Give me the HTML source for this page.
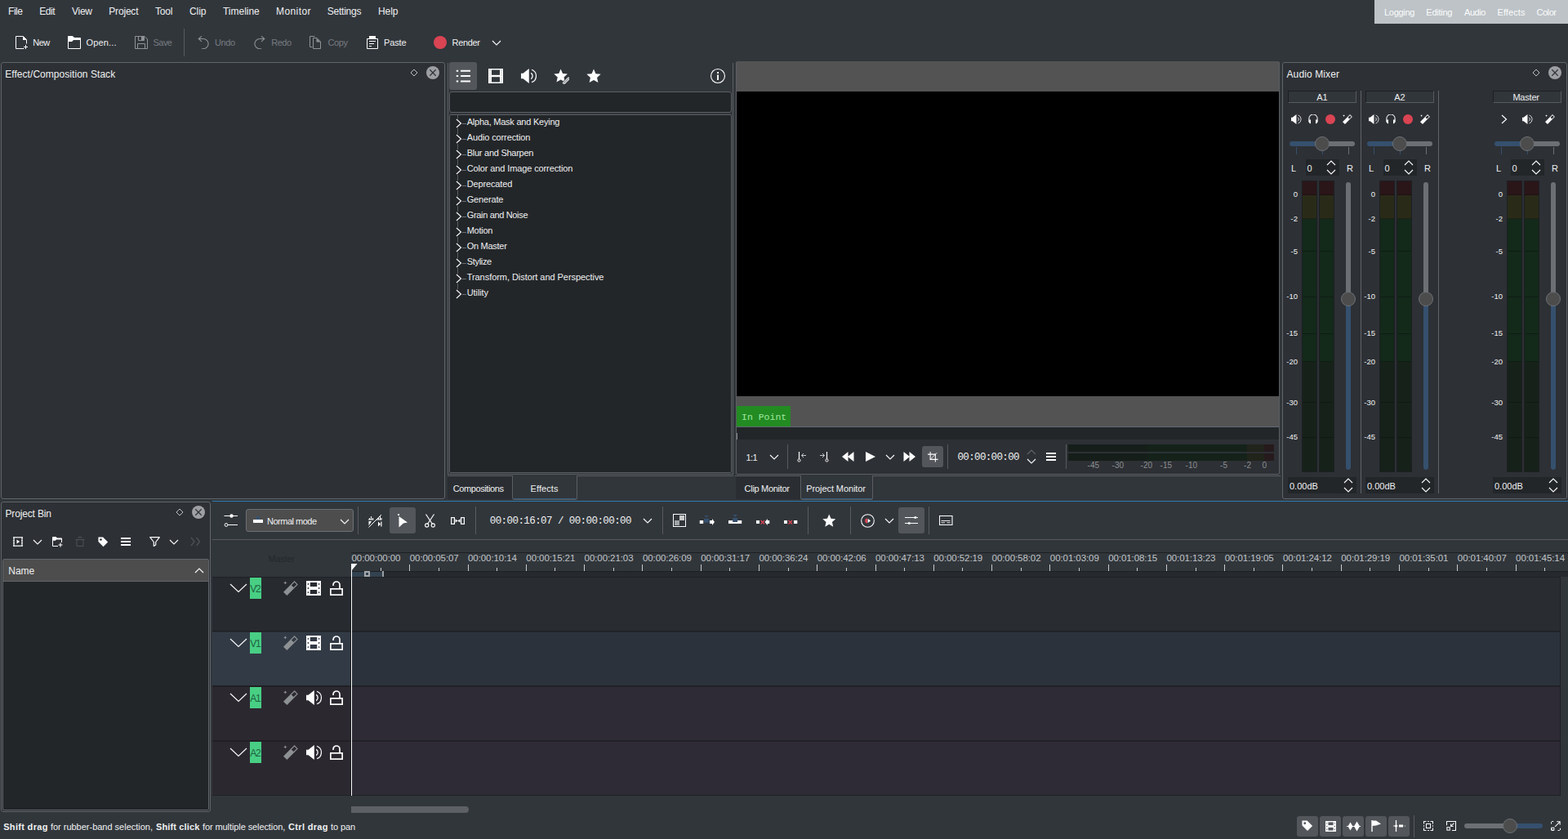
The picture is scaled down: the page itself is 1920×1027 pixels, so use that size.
<!DOCTYPE html>
<html lang="en"><head><meta charset="utf-8"><title>Kdenlive</title>
<style>
html,body{margin:0;padding:0;}
body{width:1920px;height:1027px;overflow:hidden;background:#31363b;font-family:"Liberation Sans",sans-serif;font-size:12px;color:#eff0f1;position:relative;}
body div, body svg{position:absolute;box-sizing:border-box;}
body div div{position:absolute;}
.mono{font-family:"Liberation Mono",monospace;}
</style></head>
<body>
<div style="left:10.0px;top:6px;height:16px;line-height:16px;font-size:12px;color:#eff0f1;white-space:nowrap;letter-spacing:-0.440px;">File</div>
<div style="left:48.25px;top:6px;height:16px;line-height:16px;font-size:12px;color:#eff0f1;white-space:nowrap;letter-spacing:-0.483px;">Edit</div>
<div style="left:88.0px;top:6px;height:16px;line-height:16px;font-size:12px;color:#eff0f1;white-space:nowrap;letter-spacing:-0.267px;">View</div>
<div style="left:133.25px;top:6px;height:16px;line-height:16px;font-size:12px;color:#eff0f1;white-space:nowrap;letter-spacing:-0.178px;">Project</div>
<div style="left:190.0px;top:6px;height:16px;line-height:16px;font-size:12px;color:#eff0f1;white-space:nowrap;letter-spacing:-0.173px;">Tool</div>
<div style="left:232.0px;top:6px;height:16px;line-height:16px;font-size:12px;color:#eff0f1;white-space:nowrap;letter-spacing:-0.067px;">Clip</div>
<div style="left:273.0px;top:6px;height:16px;line-height:16px;font-size:12px;color:#eff0f1;white-space:nowrap;letter-spacing:-0.019px;">Timeline</div>
<div style="left:338.0px;top:6px;height:16px;line-height:16px;font-size:12px;color:#eff0f1;white-space:nowrap;letter-spacing:0.413px;">Monitor</div>
<div style="left:400.75px;top:6px;height:16px;line-height:16px;font-size:12px;color:#eff0f1;white-space:nowrap;letter-spacing:-0.233px;">Settings</div>
<div style="left:463.0px;top:6px;height:16px;line-height:16px;font-size:12px;color:#eff0f1;white-space:nowrap;letter-spacing:-0.053px;">Help</div>
<div style="left:1683px;top:0px;width:237px;height:29px;background:#bdc3c7;"></div>
<div style="left:1695.0px;top:8px;height:14px;line-height:14px;font-size:11px;color:#fcfcfc;white-space:nowrap;letter-spacing:-0.277px;">Logging</div>
<div style="left:1746.3px;top:8px;height:14px;line-height:14px;font-size:11px;color:#fcfcfc;white-space:nowrap;letter-spacing:-0.243px;">Editing</div>
<div style="left:1793.0px;top:8px;height:14px;line-height:14px;font-size:11px;color:#fcfcfc;white-space:nowrap;letter-spacing:-0.415px;">Audio</div>
<div style="left:1833.5px;top:8px;height:14px;line-height:14px;font-size:11px;color:#fcfcfc;white-space:nowrap;letter-spacing:0.077px;">Effects</div>
<div style="left:1881.4px;top:8px;height:14px;line-height:14px;font-size:11px;color:#fcfcfc;white-space:nowrap;letter-spacing:-0.423px;">Color</div>
<svg style="left:18px;top:44px;" width="16" height="16" viewBox="0 0 16 16"><path d="M1.5 0.5H10.5L14.5 4.5V9.5M11.5 15.5H1.5V0.5" fill="none" stroke="#fcfcfc" stroke-width="1"/><path d="M10 0.5V5H14.5Z" fill="#fcfcfc"/><path d="M13.5 11V16M11 13.5H16" stroke="#fcfcfc" stroke-width="1" fill="none"/></svg>
<div style="left:40.25px;top:44px;height:16px;line-height:16px;font-size:11px;color:#eff0f1;white-space:nowrap;letter-spacing:-0.527px;">New</div>
<svg style="left:83px;top:44px;" width="16" height="16" viewBox="0 0 16 16"><path d="M0.5 0.5H6L8 2.5H15.5V15.5H0.5Z" fill="none" stroke="#fcfcfc"/><path d="M0.5 0.5H6L8 2.5H15.5V5H7L5 7H0.5Z" fill="#fcfcfc"/></svg>
<div style="left:105.6px;top:44px;height:16px;line-height:16px;font-size:11px;color:#eff0f1;white-space:nowrap;letter-spacing:0.137px;">Open...</div>
<svg style="left:165px;top:44px;" width="16" height="16" viewBox="0 0 16 16"><path d="M0.5 0.5H12L15.5 4V15.5H0.5Z" fill="none" stroke="#8f9396"/><path d="M4.5 0.5V5.5H11.5V0.5" fill="none" stroke="#8f9396"/><rect x="8" y="1" width="3" height="4" fill="#8f9396"/><path d="M3.5 15.5V9.5H12.5V15.5" fill="none" stroke="#8f9396"/></svg>
<div style="left:187.5px;top:44px;height:16px;line-height:16px;font-size:11px;color:#777b80;white-space:nowrap;letter-spacing:-0.527px;">Save</div>
<div style="left:225px;top:35px;width:1px;height:34px;background:#585c61;"></div>
<svg style="left:242px;top:44px;" width="16" height="16" viewBox="0 0 16 16"><path d="M5 0.3L1.2 3.5L5 6.800M1.2 3.5H7A6.1 6.1 0 0 1 7 15.700H4.800" fill="none" stroke="#8f9396" stroke-width="1.100"/></svg>
<div style="left:263.0px;top:44px;height:16px;line-height:16px;font-size:11px;color:#777b80;white-space:nowrap;letter-spacing:-0.430px;">Undo</div>
<svg style="left:311px;top:44px;" width="16" height="16" viewBox="0 0 16 16"><path d="M9 0.3L12.800 3.5L9 6.800M12.800 3.5H7A6.1 6.1 0 0 0 7 15.700H9.200" fill="none" stroke="#8f9396" stroke-width="1.100"/></svg>
<div style="left:332.25px;top:44px;height:16px;line-height:16px;font-size:11px;color:#777b80;white-space:nowrap;letter-spacing:-0.513px;">Redo</div>
<svg style="left:378px;top:44px;" width="16" height="16" viewBox="0 0 16 16"><path d="M4.500 13.500H1.500V0.500H7.500" fill="none" stroke="#8f9396"/><path d="M5.500 2.500H10L14.500 7V15.500H5.500Z" fill="none" stroke="#8f9396"/><path d="M9.500 2.500V7.500H14.500Z" fill="#8f9396"/></svg>
<div style="left:401.5px;top:44px;height:16px;line-height:16px;font-size:11px;color:#777b80;white-space:nowrap;letter-spacing:-0.395px;">Copy</div>
<svg style="left:448px;top:44px;" width="16" height="16" viewBox="0 0 16 16"><path d="M1.5 3.5H14.5V15.5H1.5Z" fill="none" stroke="#fcfcfc"/><rect x="4" y="0" width="8" height="4" fill="#fcfcfc"/><path d="M4 6.500H12M4 9.500H10M4 12.500H7" stroke="#fcfcfc" fill="none"/></svg>
<div style="left:470.0px;top:44px;height:16px;line-height:16px;font-size:11px;color:#eff0f1;white-space:nowrap;letter-spacing:-0.151px;">Paste</div>
<svg style="left:531px;top:44px;" width="16" height="16" viewBox="0 0 16 16"><circle cx="8" cy="8" r="8" fill="#da4453"/></svg>
<div style="left:553.6px;top:44px;height:16px;line-height:16px;font-size:11px;color:#eff0f1;white-space:nowrap;letter-spacing:-0.356px;">Render</div>
<svg style="left:602.0px;top:49.1px;" width="12" height="7" viewBox="0 0 12 7"><path d="M1 1L6 6L11 1" fill="none" stroke="#fcfcfc" stroke-width="1.1"/></svg>
<div style="left:1px;top:76px;width:544px;height:535px;background:#2d3035;border:1px solid #60656a;border-radius:3px;"></div>
<div style="left:6.25px;top:82.5px;height:16px;line-height:16px;font-size:12px;color:#eff0f1;white-space:nowrap;letter-spacing:0.047px;">Effect/Composition Stack</div>
<svg style="left:502px;top:84px;" width="10" height="10" viewBox="0 0 10 10"><path d="M5 1L9 5L5 9L1 5Z" fill="none" stroke="#bfc2c4" stroke-width="1"/></svg>
<svg style="left:521px;top:80px;" width="18" height="18" viewBox="0 0 18 18"><circle cx="9" cy="9" r="8" fill="#9d9fa2"/><path d="M5.3 5.3L12.7 12.7M12.7 5.3L5.3 12.7" stroke="#31363b" stroke-width="1.3" fill="none"/></svg>
<div style="left:548px;top:77px;width:1px;height:504px;background:#5b5f63;"></div>
<div style="left:897px;top:77px;width:1px;height:504px;background:#5b5f63;"></div>
<div style="left:550px;top:76px;width:34px;height:34px;background:#53575c;border-radius:3px;"></div>
<svg style="left:558px;top:84px;" width="19" height="18" viewBox="0 0 19 18"><path d="M6 2.7H18M6 9H18M6 15.5H18" stroke="#fcfcfc" stroke-width="2" fill="none"/><path d="M0.8 2.7H3.2M0.8 9H3.2M0.8 15.5H3.2" stroke="#fcfcfc" stroke-width="2" fill="none"/></svg>
<svg style="left:598px;top:84px;" width="18" height="18" viewBox="0 0 18 18"><rect x="0" y="0" width="18" height="18" fill="#fcfcfc"/><rect x="4" y="1.500" width="10" height="6.300" fill="#31363b"/><rect x="4" y="10.200" width="10" height="6.300" fill="#31363b"/><rect x="1.300" y="2" width="1.400" height="1.300" fill="#b9bbbd"/><rect x="15.300" y="2" width="1.400" height="1.300" fill="#b9bbbd"/><rect x="1.300" y="4.6" width="1.400" height="1.300" fill="#b9bbbd"/><rect x="15.300" y="4.6" width="1.400" height="1.300" fill="#b9bbbd"/><rect x="1.300" y="7.2" width="1.400" height="1.300" fill="#b9bbbd"/><rect x="15.300" y="7.2" width="1.400" height="1.300" fill="#b9bbbd"/><rect x="1.300" y="10.6" width="1.400" height="1.300" fill="#b9bbbd"/><rect x="15.300" y="10.6" width="1.400" height="1.300" fill="#b9bbbd"/><rect x="1.300" y="13.2" width="1.400" height="1.300" fill="#b9bbbd"/><rect x="15.300" y="13.2" width="1.400" height="1.300" fill="#b9bbbd"/><rect x="1.300" y="15.8" width="1.400" height="1.300" fill="#b9bbbd"/><rect x="15.300" y="15.8" width="1.400" height="1.300" fill="#b9bbbd"/></svg>
<svg style="left:638px;top:84px;" width="19" height="18" viewBox="0 0 19 18"><path d="M0 5.700H2.500L9.800 0V18L2.500 12.300H0Z" fill="#fcfcfc"/><path d="M12.200 5.400A4.300 4.300 0 0 1 12.200 12.600" fill="none" stroke="#fcfcfc" stroke-width="1.300"/><path d="M13 1.200A8.300 8.300 0 0 1 13 16.800" fill="none" stroke="#fcfcfc" stroke-width="1.200"/></svg>
<svg style="left:678px;top:84px;" width="19" height="19" viewBox="0 0 17.6 17.6"><path d="M8 0.5L10.2 5.6L15.7 6.1L11.6 9.8L12.8 15.2L8 12.4L3.2 15.2L4.4 9.8L0.3 6.1L5.8 5.6Z" fill="#fcfcfc"/><path d="M7.500 17.500L17.500 7.500L19 9L9 19Z" fill="#31363b"/><path d="M10.200 16.200L16.600 9.800L18.300 11.500L11.900 17.900Z" fill="#a9abad" stroke="#fcfcfc" stroke-width="0.800"/></svg>
<svg style="left:718px;top:84px;" width="18" height="18" viewBox="0 0 16 16"><path d="M8 0.5L10.2 5.6L15.7 6.1L11.6 9.8L12.8 15.2L8 12.4L3.2 15.2L4.4 9.8L0.3 6.1L5.8 5.6Z" fill="#fcfcfc"/></svg>
<svg style="left:869px;top:83px;" width="20" height="20" viewBox="0 0 20 20"><circle cx="10" cy="10" r="8.5" fill="none" stroke="#fcfcfc" stroke-width="1.1"/><rect x="9.1" y="8.5" width="1.9" height="6.5" fill="#fcfcfc"/><rect x="9.1" y="5" width="1.9" height="2" fill="#fcfcfc"/></svg>
<div style="left:550px;top:112px;width:346px;height:26px;background:#232629;border:1px solid #5b5f63;border-radius:3px;"></div>
<div style="left:550px;top:140px;width:346px;height:439px;background:#232629;border:1px solid #5b5f63;border-radius:2px;"></div>
<svg style="left:558.25px;top:145.0px;" width="7.5" height="12" viewBox="0 0 7.5 12"><path d="M1 1L6.5 6L1 11" fill="none" stroke="#fcfcfc" stroke-width="1.1"/></svg>
<div style="left:566px;top:150.5px;width:5px;height:1px;background:#6a6e72;"></div>
<div style="left:571.7px;top:141px;height:16px;line-height:16px;font-size:11px;color:#eff0f1;white-space:nowrap;letter-spacing:-0.235px;">Alpha, Mask and Keying</div>
<svg style="left:558.25px;top:164.0px;" width="7.5" height="12" viewBox="0 0 7.5 12"><path d="M1 1L6.5 6L1 11" fill="none" stroke="#fcfcfc" stroke-width="1.1"/></svg>
<div style="left:566px;top:169.5px;width:5px;height:1px;background:#6a6e72;"></div>
<div style="left:571.7px;top:160px;height:16px;line-height:16px;font-size:11px;color:#eff0f1;white-space:nowrap;letter-spacing:-0.118px;">Audio correction</div>
<svg style="left:558.25px;top:183.0px;" width="7.5" height="12" viewBox="0 0 7.5 12"><path d="M1 1L6.5 6L1 11" fill="none" stroke="#fcfcfc" stroke-width="1.1"/></svg>
<div style="left:566px;top:188.5px;width:5px;height:1px;background:#6a6e72;"></div>
<div style="left:571.7px;top:179px;height:16px;line-height:16px;font-size:11px;color:#eff0f1;white-space:nowrap;letter-spacing:-0.256px;">Blur and Sharpen</div>
<svg style="left:558.25px;top:202.0px;" width="7.5" height="12" viewBox="0 0 7.5 12"><path d="M1 1L6.5 6L1 11" fill="none" stroke="#fcfcfc" stroke-width="1.1"/></svg>
<div style="left:566px;top:207.5px;width:5px;height:1px;background:#6a6e72;"></div>
<div style="left:571.7px;top:198px;height:16px;line-height:16px;font-size:11px;color:#eff0f1;white-space:nowrap;letter-spacing:-0.118px;">Color and Image correction</div>
<svg style="left:558.25px;top:221.0px;" width="7.5" height="12" viewBox="0 0 7.5 12"><path d="M1 1L6.5 6L1 11" fill="none" stroke="#fcfcfc" stroke-width="1.1"/></svg>
<div style="left:566px;top:226.5px;width:5px;height:1px;background:#6a6e72;"></div>
<div style="left:571.7px;top:217px;height:16px;line-height:16px;font-size:11px;color:#eff0f1;white-space:nowrap;letter-spacing:-0.141px;">Deprecated</div>
<svg style="left:558.25px;top:240.0px;" width="7.5" height="12" viewBox="0 0 7.5 12"><path d="M1 1L6.5 6L1 11" fill="none" stroke="#fcfcfc" stroke-width="1.1"/></svg>
<div style="left:566px;top:245.5px;width:5px;height:1px;background:#6a6e72;"></div>
<div style="left:571.7px;top:236px;height:16px;line-height:16px;font-size:11px;color:#eff0f1;white-space:nowrap;letter-spacing:-0.167px;">Generate</div>
<svg style="left:558.25px;top:259.0px;" width="7.5" height="12" viewBox="0 0 7.5 12"><path d="M1 1L6.5 6L1 11" fill="none" stroke="#fcfcfc" stroke-width="1.1"/></svg>
<div style="left:566px;top:264.5px;width:5px;height:1px;background:#6a6e72;"></div>
<div style="left:571.7px;top:255px;height:16px;line-height:16px;font-size:11px;color:#eff0f1;white-space:nowrap;letter-spacing:-0.334px;">Grain and Noise</div>
<svg style="left:558.25px;top:278.0px;" width="7.5" height="12" viewBox="0 0 7.5 12"><path d="M1 1L6.5 6L1 11" fill="none" stroke="#fcfcfc" stroke-width="1.1"/></svg>
<div style="left:566px;top:283.5px;width:5px;height:1px;background:#6a6e72;"></div>
<div style="left:571.7px;top:274px;height:16px;line-height:16px;font-size:11px;color:#eff0f1;white-space:nowrap;letter-spacing:-0.260px;">Motion</div>
<svg style="left:558.25px;top:297.0px;" width="7.5" height="12" viewBox="0 0 7.5 12"><path d="M1 1L6.5 6L1 11" fill="none" stroke="#fcfcfc" stroke-width="1.1"/></svg>
<div style="left:566px;top:302.5px;width:5px;height:1px;background:#6a6e72;"></div>
<div style="left:571.7px;top:293px;height:16px;line-height:16px;font-size:11px;color:#eff0f1;white-space:nowrap;letter-spacing:-0.271px;">On Master</div>
<svg style="left:558.25px;top:316.0px;" width="7.5" height="12" viewBox="0 0 7.5 12"><path d="M1 1L6.5 6L1 11" fill="none" stroke="#fcfcfc" stroke-width="1.1"/></svg>
<div style="left:566px;top:321.5px;width:5px;height:1px;background:#6a6e72;"></div>
<div style="left:571.7px;top:312px;height:16px;line-height:16px;font-size:11px;color:#eff0f1;white-space:nowrap;letter-spacing:-0.316px;">Stylize</div>
<svg style="left:558.25px;top:335.0px;" width="7.5" height="12" viewBox="0 0 7.5 12"><path d="M1 1L6.5 6L1 11" fill="none" stroke="#fcfcfc" stroke-width="1.1"/></svg>
<div style="left:566px;top:340.5px;width:5px;height:1px;background:#6a6e72;"></div>
<div style="left:571.7px;top:331px;height:16px;line-height:16px;font-size:11px;color:#eff0f1;white-space:nowrap;letter-spacing:-0.053px;">Transform, Distort and Perspective</div>
<svg style="left:558.25px;top:354.0px;" width="7.5" height="12" viewBox="0 0 7.5 12"><path d="M1 1L6.5 6L1 11" fill="none" stroke="#fcfcfc" stroke-width="1.1"/></svg>
<div style="left:566px;top:359.5px;width:5px;height:1px;background:#6a6e72;"></div>
<div style="left:571.7px;top:350px;height:16px;line-height:16px;font-size:11px;color:#eff0f1;white-space:nowrap;letter-spacing:-0.083px;">Utility</div>
<div style="left:560px;top:141px;width:1px;height:4px;background:#5a5e62;"></div>
<div style="left:560px;top:157px;width:1px;height:7px;background:#5a5e62;"></div>
<div style="left:560px;top:176px;width:1px;height:7px;background:#5a5e62;"></div>
<div style="left:560px;top:195px;width:1px;height:7px;background:#5a5e62;"></div>
<div style="left:560px;top:214px;width:1px;height:7px;background:#5a5e62;"></div>
<div style="left:560px;top:233px;width:1px;height:7px;background:#5a5e62;"></div>
<div style="left:560px;top:252px;width:1px;height:7px;background:#5a5e62;"></div>
<div style="left:560px;top:271px;width:1px;height:7px;background:#5a5e62;"></div>
<div style="left:560px;top:290px;width:1px;height:7px;background:#5a5e62;"></div>
<div style="left:560px;top:309px;width:1px;height:7px;background:#5a5e62;"></div>
<div style="left:560px;top:328px;width:1px;height:7px;background:#5a5e62;"></div>
<div style="left:560px;top:347px;width:1px;height:7px;background:#5a5e62;"></div>
<div style="left:548px;top:582px;width:80px;height:1px;background:#5b5f63;"></div>
<div style="left:706px;top:582px;width:192px;height:1px;background:#5b5f63;"></div>
<div style="left:548px;top:583px;width:80px;height:28px;background:#2a2d32;border-radius:0 0 0 3px;"></div>
<div style="left:548px;top:580px;width:350px;height:1px;background:#5b5f63;"></div>
<div style="left:554.7px;top:590px;height:16px;line-height:16px;font-size:11px;color:#eff0f1;white-space:nowrap;letter-spacing:-0.396px;">Compositions</div>
<div style="left:627px;top:582px;width:80px;height:30px;border-left:1px solid #5b5f63;border-right:1px solid #5b5f63;border-bottom:1px solid #5b5f63;border-radius:0 0 3px 3px;background:#31363b;"></div>
<div style="left:629px;top:610px;width:76px;height:1px;background:#3a5f80;"></div>
<div style="left:649.6px;top:590px;height:16px;line-height:16px;font-size:11px;color:#eff0f1;white-space:nowrap;letter-spacing:0.077px;">Effects</div>
<div style="left:901px;top:75px;width:666px;height:506px;border:1px solid #5b5f63;border-radius:2px;background:#2d3035;"></div>
<div style="left:902px;top:75px;width:664px;height:37px;background:#535353;"></div>
<div style="left:902px;top:112px;width:664px;height:373px;background:#000;"></div>
<div style="left:902px;top:485px;width:664px;height:38px;background:#535353;"></div>
<div style="left:902px;top:522px;width:664px;height:1px;background:#5f6a74;"></div>
<div style="left:902px;top:523px;width:664px;height:15px;background:#232629;"></div>
<div style="left:902px;top:530px;width:1px;height:8px;background:#8a8d90;"></div>
<div style="left:902px;top:497px;width:66px;height:25px;background:#228b22;"></div>
<div style="left:908px;top:502.5px;height:16px;line-height:16px;font-size:11.5px;color:#9fe89f;white-space:nowrap;font-family:'Liberation Mono',monospace;">In Point</div>
<div style="left:913.5px;top:552px;height:16px;line-height:16px;font-size:11px;color:#eff0f1;white-space:nowrap;letter-spacing:-0.645px;">1:1</div>
<svg style="left:942.0px;top:556.0px;" width="12" height="7" viewBox="0 0 12 7"><path d="M1 1L6 6L11 1" fill="none" stroke="#fcfcfc" stroke-width="1.1"/></svg>
<div style="left:964px;top:544px;width:1px;height:30px;background:#585c61;"></div>
<svg style="left:976px;top:553px;" width="12" height="13" viewBox="0 0 12 13"><path d="M2.5 0V9" stroke="#fcfcfc" stroke-width="1.2" fill="none"/><circle cx="2.5" cy="10.5" r="1.6" fill="none" stroke="#fcfcfc" stroke-width="1"/><path d="M5.5 4.5H11M8 2L5.5 4.5L8 7" stroke="#c8cacc" stroke-width="1" fill="none"/></svg>
<svg style="left:1003px;top:553px;" width="12" height="13" viewBox="0 0 12 13"><path d="M9.5 0V9" stroke="#fcfcfc" stroke-width="1.2" fill="none"/><circle cx="9.5" cy="10.5" r="1.6" fill="none" stroke="#fcfcfc" stroke-width="1"/><path d="M1 4.5H6.5M4 2L6.5 4.5L4 7" stroke="#c8cacc" stroke-width="1" fill="none"/></svg>
<svg style="left:1031px;top:553px;" width="15" height="12" viewBox="0 0 15 12"><path d="M7.5 0V12L0 6ZM14.5 0V12L7 6Z" fill="#fcfcfc"/></svg>
<svg style="left:1060px;top:553px;" width="12" height="12" viewBox="0 0 12 12"><path d="M0 0L12 6L0 12Z" fill="#fcfcfc"/></svg>
<svg style="left:1083.5px;top:556.0px;" width="12" height="7" viewBox="0 0 12 7"><path d="M1 1L6 6L11 1" fill="none" stroke="#fcfcfc" stroke-width="1.1"/></svg>
<svg style="left:1106px;top:553px;" width="15" height="12" viewBox="0 0 15 12"><path d="M0.5 0V12L8 6ZM7.5 0V12L15 6Z" fill="#fcfcfc"/></svg>
<div style="left:1129px;top:546px;width:26px;height:26px;background:#53575c;border-radius:3px;"></div>
<svg style="left:1136px;top:553px;" width="12.5" height="12.5" viewBox="0 0 14 14"><path d="M3.5 0V10.5H14M0 3.5H10.5V14" stroke="#fcfcfc" stroke-width="1.2" fill="none"/><path d="M3.5 10.5L12.5 1.5" stroke="#fcfcfc" stroke-width="1" fill="none"/></svg>
<div style="left:1160px;top:544px;width:1px;height:30px;background:#585c61;"></div>
<div style="left:1172.5px;top:552px;height:16px;line-height:16px;font-size:12.5px;color:#eff0f1;white-space:nowrap;letter-spacing:-0.650px;font-family:'Liberation Mono',monospace;">00:00:00:00</div>
<svg style="left:1257.0px;top:550.0px;" width="12" height="7" viewBox="0 0 12 7"><path d="M1 6L6 1L11 6" fill="none" stroke="#62666a" stroke-width="1.1"/></svg>
<svg style="left:1257.0px;top:560.8px;" width="12" height="7" viewBox="0 0 12 7"><path d="M1 1L6 6L11 1" fill="none" stroke="#fcfcfc" stroke-width="1.1"/></svg>
<svg style="left:1281px;top:554px;" width="12" height="10" viewBox="0 0 12 10"><path d="M0 1H12M0 5H12M0 9H12" stroke="#fcfcfc" stroke-width="2" fill="none"/></svg>
<div style="left:1305px;top:544px;width:1px;height:30px;background:#585c61;"></div>
<div style="left:1308px;top:544px;width:252px;height:9px;background:linear-gradient(to right,#151e19 0,#151e19 97px,#14221a 97px,#14221a 219px,#21241a 219px,#21241a 240px,#261a1c 240px);"></div>
<div style="left:1308px;top:555px;width:252px;height:9px;background:linear-gradient(to right,#151e19 0,#151e19 97px,#14221a 97px,#14221a 219px,#21241a 219px,#21241a 240px,#261a1c 240px);"></div>
<div style="left:1316px;top:564px;height:12px;line-height:12px;font-size:10px;color:#8b8e91;white-space:nowrap;width:30px;text-align:right;">-45</div>
<div style="left:1346px;top:564px;height:12px;line-height:12px;font-size:10px;color:#8b8e91;white-space:nowrap;width:30px;text-align:right;">-30</div>
<div style="left:1381px;top:564px;height:12px;line-height:12px;font-size:10px;color:#8b8e91;white-space:nowrap;width:30px;text-align:right;">-20</div>
<div style="left:1405px;top:564px;height:12px;line-height:12px;font-size:10px;color:#8b8e91;white-space:nowrap;width:30px;text-align:right;">-15</div>
<div style="left:1436px;top:564px;height:12px;line-height:12px;font-size:10px;color:#8b8e91;white-space:nowrap;width:30px;text-align:right;">-10</div>
<div style="left:1473px;top:564px;height:12px;line-height:12px;font-size:10px;color:#8b8e91;white-space:nowrap;width:30px;text-align:right;">-5</div>
<div style="left:1502px;top:564px;height:12px;line-height:12px;font-size:10px;color:#8b8e91;white-space:nowrap;width:30px;text-align:right;">-2</div>
<div style="left:1521px;top:564px;height:12px;line-height:12px;font-size:10px;color:#8b8e91;white-space:nowrap;width:30px;text-align:right;">0</div>
<div style="left:900px;top:582px;width:81px;height:1px;background:#5b5f63;"></div>
<div style="left:1068px;top:582px;width:500px;height:1px;background:#5b5f63;"></div>
<div style="left:901px;top:583px;width:80px;height:28px;background:#2a2e32;border-radius:0 0 0 3px;"></div>
<div style="left:911.6px;top:590px;height:16px;line-height:16px;font-size:11px;color:#eff0f1;white-space:nowrap;letter-spacing:-0.299px;">Clip Monitor</div>
<div style="left:980px;top:582px;width:89px;height:30px;border-left:1px solid #5b5f63;border-right:1px solid #5b5f63;border-bottom:1px solid #5b5f63;border-radius:0 0 3px 3px;background:#31363b;"></div>
<div style="left:982px;top:610px;width:85px;height:1px;background:#3a5f80;"></div>
<div style="left:987.25px;top:590px;height:16px;line-height:16px;font-size:11px;color:#eff0f1;white-space:nowrap;letter-spacing:-0.087px;">Project Monitor</div>
<div style="left:260px;top:613px;width:1660px;height:1px;background:#2f7bb0;"></div>
<div style="left:1570px;top:76px;width:349px;height:535px;background:#2d3035;border:1px solid #60656a;border-radius:3px;"></div>
<div style="left:1575.5px;top:82.5px;height:16px;line-height:16px;font-size:12px;color:#eff0f1;white-space:nowrap;letter-spacing:0.114px;">Audio Mixer</div>
<svg style="left:1876px;top:84px;" width="10" height="10" viewBox="0 0 10 10"><path d="M5 1L9 5L5 9L1 5Z" fill="none" stroke="#bfc2c4" stroke-width="1"/></svg>
<svg style="left:1895px;top:80px;" width="18" height="18" viewBox="0 0 18 18"><circle cx="9" cy="9" r="8" fill="#9d9fa2"/><path d="M5.3 5.3L12.7 12.7M12.7 5.3L5.3 12.7" stroke="#31363b" stroke-width="1.3" fill="none"/></svg>
<div style="left:1577px;top:111px;width:84px;height:15px;background:#31363b;border-top:1px solid #1d2023;border-left:1px solid #1d2023;border-bottom:1px solid #565b60;border-right:1px solid #565b60;"></div>
<div style="left:1577px;top:111.5px;height:14px;line-height:14px;font-size:11px;color:#eff0f1;white-space:nowrap;width:84px;text-align:center;">A1</div>
<svg style="left:1581px;top:140px;" width="12.5" height="12" viewBox="0 0 19 18"><path d="M0 5.700H2.500L9.800 0V18L2.500 12.300H0Z" fill="#fcfcfc"/><path d="M12.200 5.400A4.300 4.300 0 0 1 12.200 12.600" fill="none" stroke="#fcfcfc" stroke-width="1.300"/><path d="M13 1.200A8.300 8.300 0 0 1 13 16.800" fill="none" stroke="#fcfcfc" stroke-width="1.200"/></svg>
<svg style="left:1602px;top:140px;" width="12" height="12" viewBox="1 2 14 14"><path d="M2 13V8A6 6 0 0 1 14 8V13" fill="none" stroke="#fcfcfc" stroke-width="1.2"/><path d="M2 9.5H4.5V15H3.2L2 13Z M14 9.5H11.5V15H12.8L14 13Z" fill="#fcfcfc"/></svg>
<svg style="left:1623px;top:140px;" width="12" height="12" viewBox="0 0 12 12"><circle cx="6" cy="6" r="6" fill="#da4453"/></svg>
<svg style="left:1644px;top:140px;" width="12" height="12" viewBox="0 0 18 18"><path d="M0 13.7L4.4 18L17.8 4.4L13.6 0Z" fill="#fcfcfc"/><path d="M13.6 1.8L16.2 4.4L12.4 8.1L9.9 5.6Z" fill="#2d3035"/><path d="M2.3 0.3L3 1.8L4.5 2.4L3 3L2.3 4.6L1.6 3L0.1 2.4L1.6 1.8Z" fill="#fcfcfc"/></svg>
<div style="left:1579px;top:173px;width:40px;height:6px;background:#35506e;border-radius:3px 0 0 3px;"></div>
<div style="left:1619px;top:173px;width:40px;height:6px;background:#6c7074;border-radius:0 3px 3px 0;"></div>
<div style="left:1610px;top:167px;width:18px;height:18px;background:#4c4c4c;border:1px solid #6c7074;border-radius:9px;"></div>
<div style="left:1587px;top:180px;width:1px;height:9px;background:#35506e;"></div>
<div style="left:1619px;top:185px;width:1px;height:4px;background:#35506e;"></div>
<div style="left:1651px;top:180px;width:1px;height:9px;background:#6c7074;"></div>
<div style="left:1581px;top:198px;height:16px;line-height:16px;font-size:11px;color:#eff0f1;white-space:nowrap;">L</div>
<div style="left:1599px;top:195px;width:41px;height:20px;background:#232629;"></div>
<div style="left:1600.5px;top:198px;height:16px;line-height:16px;font-size:11px;color:#eff0f1;white-space:nowrap;">0</div>
<svg style="left:1624.0px;top:196.0px;" width="12" height="7" viewBox="0 0 12 7"><path d="M1 6L6 1L11 6" fill="none" stroke="#fcfcfc" stroke-width="1.1"/></svg>
<svg style="left:1624.0px;top:207.0px;" width="12" height="7" viewBox="0 0 12 7"><path d="M1 1L6 6L11 1" fill="none" stroke="#fcfcfc" stroke-width="1.1"/></svg>
<div style="left:1649px;top:198px;height:16px;line-height:16px;font-size:11px;color:#eff0f1;white-space:nowrap;">R</div>
<div style="left:1594px;top:221px;width:19px;height:357px;background:linear-gradient(to bottom,#2a1619 0,#2a1619 17px,#292b18 17px,#292b18 46px,#13291a 46px,#13291a 221px,#16211a 221px);border:1px solid #1c1f22;"></div>
<div style="left:1595px;top:238px;width:17px;height:1px;background:rgba(0,0,0,0.25);"></div>
<div style="left:1595px;top:267px;width:17px;height:1px;background:rgba(0,0,0,0.25);"></div>
<div style="left:1595px;top:307px;width:17px;height:1px;background:rgba(0,0,0,0.25);"></div>
<div style="left:1595px;top:363px;width:17px;height:1px;background:rgba(0,0,0,0.25);"></div>
<div style="left:1595px;top:408px;width:17px;height:1px;background:rgba(0,0,0,0.25);"></div>
<div style="left:1595px;top:442px;width:17px;height:1px;background:rgba(0,0,0,0.25);"></div>
<div style="left:1595px;top:492px;width:17px;height:1px;background:rgba(0,0,0,0.25);"></div>
<div style="left:1595px;top:535px;width:17px;height:1px;background:rgba(0,0,0,0.25);"></div>
<div style="left:1615px;top:221px;width:19px;height:357px;background:linear-gradient(to bottom,#2a1619 0,#2a1619 17px,#292b18 17px,#292b18 46px,#13291a 46px,#13291a 221px,#16211a 221px);border:1px solid #1c1f22;"></div>
<div style="left:1616px;top:238px;width:17px;height:1px;background:rgba(0,0,0,0.25);"></div>
<div style="left:1616px;top:267px;width:17px;height:1px;background:rgba(0,0,0,0.25);"></div>
<div style="left:1616px;top:307px;width:17px;height:1px;background:rgba(0,0,0,0.25);"></div>
<div style="left:1616px;top:363px;width:17px;height:1px;background:rgba(0,0,0,0.25);"></div>
<div style="left:1616px;top:408px;width:17px;height:1px;background:rgba(0,0,0,0.25);"></div>
<div style="left:1616px;top:442px;width:17px;height:1px;background:rgba(0,0,0,0.25);"></div>
<div style="left:1616px;top:492px;width:17px;height:1px;background:rgba(0,0,0,0.25);"></div>
<div style="left:1616px;top:535px;width:17px;height:1px;background:rgba(0,0,0,0.25);"></div>
<div style="left:1561px;top:231.5px;height:12px;line-height:12px;font-size:9.5px;color:#eff0f1;white-space:nowrap;width:28px;text-align:right;">0</div>
<div style="left:1561px;top:261.5px;height:12px;line-height:12px;font-size:9.5px;color:#eff0f1;white-space:nowrap;width:28px;text-align:right;">-2</div>
<div style="left:1561px;top:301.5px;height:12px;line-height:12px;font-size:9.5px;color:#eff0f1;white-space:nowrap;width:28px;text-align:right;">-5</div>
<div style="left:1561px;top:356.5px;height:12px;line-height:12px;font-size:9.5px;color:#eff0f1;white-space:nowrap;width:28px;text-align:right;">-10</div>
<div style="left:1561px;top:401.5px;height:12px;line-height:12px;font-size:9.5px;color:#eff0f1;white-space:nowrap;width:28px;text-align:right;">-15</div>
<div style="left:1561px;top:436.5px;height:12px;line-height:12px;font-size:9.5px;color:#eff0f1;white-space:nowrap;width:28px;text-align:right;">-20</div>
<div style="left:1561px;top:486.5px;height:12px;line-height:12px;font-size:9.5px;color:#eff0f1;white-space:nowrap;width:28px;text-align:right;">-30</div>
<div style="left:1561px;top:528.5px;height:12px;line-height:12px;font-size:9.5px;color:#eff0f1;white-space:nowrap;width:28px;text-align:right;">-45</div>
<div style="left:1648px;top:223px;width:6px;height:143px;background:#6c7074;border-radius:3px 3px 0 0;"></div>
<div style="left:1648px;top:366px;width:6px;height:209px;background:#35506e;border-radius:0 0 3px 3px;"></div>
<div style="left:1642px;top:357px;width:18px;height:18px;background:#4c4c4c;border:1px solid #6c7074;border-radius:9px;"></div>
<div style="left:1577px;top:584px;width:84px;height:20px;background:#232629;"></div>
<div style="left:1579px;top:587px;height:16px;line-height:16px;font-size:11px;color:#eff0f1;white-space:nowrap;">0.00dB</div>
<svg style="left:1645.0px;top:585.0px;" width="12" height="7" viewBox="0 0 12 7"><path d="M1 6L6 1L11 6" fill="none" stroke="#fcfcfc" stroke-width="1.1"/></svg>
<svg style="left:1645.0px;top:596.0px;" width="12" height="7" viewBox="0 0 12 7"><path d="M1 1L6 6L11 1" fill="none" stroke="#fcfcfc" stroke-width="1.1"/></svg>
<div style="left:1672px;top:111px;width:84px;height:15px;background:#31363b;border-top:1px solid #1d2023;border-left:1px solid #1d2023;border-bottom:1px solid #565b60;border-right:1px solid #565b60;"></div>
<div style="left:1672px;top:111.5px;height:14px;line-height:14px;font-size:11px;color:#eff0f1;white-space:nowrap;width:84px;text-align:center;">A2</div>
<svg style="left:1676px;top:140px;" width="12.5" height="12" viewBox="0 0 19 18"><path d="M0 5.700H2.500L9.800 0V18L2.500 12.300H0Z" fill="#fcfcfc"/><path d="M12.200 5.400A4.300 4.300 0 0 1 12.200 12.600" fill="none" stroke="#fcfcfc" stroke-width="1.300"/><path d="M13 1.200A8.300 8.300 0 0 1 13 16.800" fill="none" stroke="#fcfcfc" stroke-width="1.200"/></svg>
<svg style="left:1697px;top:140px;" width="12" height="12" viewBox="1 2 14 14"><path d="M2 13V8A6 6 0 0 1 14 8V13" fill="none" stroke="#fcfcfc" stroke-width="1.2"/><path d="M2 9.5H4.5V15H3.2L2 13Z M14 9.5H11.5V15H12.8L14 13Z" fill="#fcfcfc"/></svg>
<svg style="left:1718px;top:140px;" width="12" height="12" viewBox="0 0 12 12"><circle cx="6" cy="6" r="6" fill="#da4453"/></svg>
<svg style="left:1739px;top:140px;" width="12" height="12" viewBox="0 0 18 18"><path d="M0 13.7L4.4 18L17.8 4.4L13.6 0Z" fill="#fcfcfc"/><path d="M13.6 1.8L16.2 4.4L12.4 8.1L9.9 5.6Z" fill="#2d3035"/><path d="M2.3 0.3L3 1.8L4.5 2.4L3 3L2.3 4.6L1.6 3L0.1 2.4L1.6 1.8Z" fill="#fcfcfc"/></svg>
<div style="left:1674px;top:173px;width:40px;height:6px;background:#35506e;border-radius:3px 0 0 3px;"></div>
<div style="left:1714px;top:173px;width:40px;height:6px;background:#6c7074;border-radius:0 3px 3px 0;"></div>
<div style="left:1705px;top:167px;width:18px;height:18px;background:#4c4c4c;border:1px solid #6c7074;border-radius:9px;"></div>
<div style="left:1682px;top:180px;width:1px;height:9px;background:#35506e;"></div>
<div style="left:1714px;top:185px;width:1px;height:4px;background:#35506e;"></div>
<div style="left:1746px;top:180px;width:1px;height:9px;background:#6c7074;"></div>
<div style="left:1676px;top:198px;height:16px;line-height:16px;font-size:11px;color:#eff0f1;white-space:nowrap;">L</div>
<div style="left:1694px;top:195px;width:41px;height:20px;background:#232629;"></div>
<div style="left:1695.5px;top:198px;height:16px;line-height:16px;font-size:11px;color:#eff0f1;white-space:nowrap;">0</div>
<svg style="left:1719.0px;top:196.0px;" width="12" height="7" viewBox="0 0 12 7"><path d="M1 6L6 1L11 6" fill="none" stroke="#fcfcfc" stroke-width="1.1"/></svg>
<svg style="left:1719.0px;top:207.0px;" width="12" height="7" viewBox="0 0 12 7"><path d="M1 1L6 6L11 1" fill="none" stroke="#fcfcfc" stroke-width="1.1"/></svg>
<div style="left:1744px;top:198px;height:16px;line-height:16px;font-size:11px;color:#eff0f1;white-space:nowrap;">R</div>
<div style="left:1689px;top:221px;width:19px;height:357px;background:linear-gradient(to bottom,#2a1619 0,#2a1619 17px,#292b18 17px,#292b18 46px,#13291a 46px,#13291a 221px,#16211a 221px);border:1px solid #1c1f22;"></div>
<div style="left:1690px;top:238px;width:17px;height:1px;background:rgba(0,0,0,0.25);"></div>
<div style="left:1690px;top:267px;width:17px;height:1px;background:rgba(0,0,0,0.25);"></div>
<div style="left:1690px;top:307px;width:17px;height:1px;background:rgba(0,0,0,0.25);"></div>
<div style="left:1690px;top:363px;width:17px;height:1px;background:rgba(0,0,0,0.25);"></div>
<div style="left:1690px;top:408px;width:17px;height:1px;background:rgba(0,0,0,0.25);"></div>
<div style="left:1690px;top:442px;width:17px;height:1px;background:rgba(0,0,0,0.25);"></div>
<div style="left:1690px;top:492px;width:17px;height:1px;background:rgba(0,0,0,0.25);"></div>
<div style="left:1690px;top:535px;width:17px;height:1px;background:rgba(0,0,0,0.25);"></div>
<div style="left:1710px;top:221px;width:19px;height:357px;background:linear-gradient(to bottom,#2a1619 0,#2a1619 17px,#292b18 17px,#292b18 46px,#13291a 46px,#13291a 221px,#16211a 221px);border:1px solid #1c1f22;"></div>
<div style="left:1711px;top:238px;width:17px;height:1px;background:rgba(0,0,0,0.25);"></div>
<div style="left:1711px;top:267px;width:17px;height:1px;background:rgba(0,0,0,0.25);"></div>
<div style="left:1711px;top:307px;width:17px;height:1px;background:rgba(0,0,0,0.25);"></div>
<div style="left:1711px;top:363px;width:17px;height:1px;background:rgba(0,0,0,0.25);"></div>
<div style="left:1711px;top:408px;width:17px;height:1px;background:rgba(0,0,0,0.25);"></div>
<div style="left:1711px;top:442px;width:17px;height:1px;background:rgba(0,0,0,0.25);"></div>
<div style="left:1711px;top:492px;width:17px;height:1px;background:rgba(0,0,0,0.25);"></div>
<div style="left:1711px;top:535px;width:17px;height:1px;background:rgba(0,0,0,0.25);"></div>
<div style="left:1656px;top:231.5px;height:12px;line-height:12px;font-size:9.5px;color:#eff0f1;white-space:nowrap;width:28px;text-align:right;">0</div>
<div style="left:1656px;top:261.5px;height:12px;line-height:12px;font-size:9.5px;color:#eff0f1;white-space:nowrap;width:28px;text-align:right;">-2</div>
<div style="left:1656px;top:301.5px;height:12px;line-height:12px;font-size:9.5px;color:#eff0f1;white-space:nowrap;width:28px;text-align:right;">-5</div>
<div style="left:1656px;top:356.5px;height:12px;line-height:12px;font-size:9.5px;color:#eff0f1;white-space:nowrap;width:28px;text-align:right;">-10</div>
<div style="left:1656px;top:401.5px;height:12px;line-height:12px;font-size:9.5px;color:#eff0f1;white-space:nowrap;width:28px;text-align:right;">-15</div>
<div style="left:1656px;top:436.5px;height:12px;line-height:12px;font-size:9.5px;color:#eff0f1;white-space:nowrap;width:28px;text-align:right;">-20</div>
<div style="left:1656px;top:486.5px;height:12px;line-height:12px;font-size:9.5px;color:#eff0f1;white-space:nowrap;width:28px;text-align:right;">-30</div>
<div style="left:1656px;top:528.5px;height:12px;line-height:12px;font-size:9.5px;color:#eff0f1;white-space:nowrap;width:28px;text-align:right;">-45</div>
<div style="left:1743px;top:223px;width:6px;height:143px;background:#6c7074;border-radius:3px 3px 0 0;"></div>
<div style="left:1743px;top:366px;width:6px;height:209px;background:#35506e;border-radius:0 0 3px 3px;"></div>
<div style="left:1737px;top:357px;width:18px;height:18px;background:#4c4c4c;border:1px solid #6c7074;border-radius:9px;"></div>
<div style="left:1672px;top:584px;width:84px;height:20px;background:#232629;"></div>
<div style="left:1674px;top:587px;height:16px;line-height:16px;font-size:11px;color:#eff0f1;white-space:nowrap;">0.00dB</div>
<svg style="left:1740.0px;top:585.0px;" width="12" height="7" viewBox="0 0 12 7"><path d="M1 6L6 1L11 6" fill="none" stroke="#fcfcfc" stroke-width="1.1"/></svg>
<svg style="left:1740.0px;top:596.0px;" width="12" height="7" viewBox="0 0 12 7"><path d="M1 1L6 6L11 1" fill="none" stroke="#fcfcfc" stroke-width="1.1"/></svg>
<div style="left:1828px;top:111px;width:84px;height:15px;background:#31363b;border-top:1px solid #1d2023;border-left:1px solid #1d2023;border-bottom:1px solid #565b60;border-right:1px solid #565b60;"></div>
<div style="left:1852.4px;top:111.5px;height:14px;line-height:14px;font-size:11px;color:#eff0f1;white-space:nowrap;letter-spacing:-0.201px;">Master</div>
<svg style="left:1838.25px;top:140.0px;" width="7.5" height="12" viewBox="0 0 7.5 12"><path d="M1 1L6.5 6L1 11" fill="none" stroke="#fcfcfc" stroke-width="1.2"/></svg>
<svg style="left:1864px;top:140px;" width="12.5" height="12" viewBox="0 0 19 18"><path d="M0 5.700H2.500L9.800 0V18L2.500 12.300H0Z" fill="#fcfcfc"/><path d="M12.200 5.400A4.300 4.300 0 0 1 12.200 12.600" fill="none" stroke="#fcfcfc" stroke-width="1.300"/><path d="M13 1.200A8.300 8.300 0 0 1 13 16.800" fill="none" stroke="#fcfcfc" stroke-width="1.200"/></svg>
<svg style="left:1892px;top:140px;" width="12" height="12" viewBox="0 0 18 18"><path d="M0 13.7L4.4 18L17.8 4.4L13.6 0Z" fill="#fcfcfc"/><path d="M13.6 1.8L16.2 4.4L12.4 8.1L9.9 5.6Z" fill="#2d3035"/><path d="M2.3 0.3L3 1.8L4.5 2.4L3 3L2.3 4.6L1.6 3L0.1 2.4L1.6 1.8Z" fill="#fcfcfc"/></svg>
<div style="left:1830px;top:173px;width:40px;height:6px;background:#35506e;border-radius:3px 0 0 3px;"></div>
<div style="left:1870px;top:173px;width:40px;height:6px;background:#6c7074;border-radius:0 3px 3px 0;"></div>
<div style="left:1861px;top:167px;width:18px;height:18px;background:#4c4c4c;border:1px solid #6c7074;border-radius:9px;"></div>
<div style="left:1838px;top:180px;width:1px;height:9px;background:#35506e;"></div>
<div style="left:1870px;top:185px;width:1px;height:4px;background:#35506e;"></div>
<div style="left:1902px;top:180px;width:1px;height:9px;background:#6c7074;"></div>
<div style="left:1832px;top:198px;height:16px;line-height:16px;font-size:11px;color:#eff0f1;white-space:nowrap;">L</div>
<div style="left:1850px;top:195px;width:41px;height:20px;background:#232629;"></div>
<div style="left:1851.5px;top:198px;height:16px;line-height:16px;font-size:11px;color:#eff0f1;white-space:nowrap;">0</div>
<svg style="left:1875.0px;top:196.0px;" width="12" height="7" viewBox="0 0 12 7"><path d="M1 6L6 1L11 6" fill="none" stroke="#fcfcfc" stroke-width="1.1"/></svg>
<svg style="left:1875.0px;top:207.0px;" width="12" height="7" viewBox="0 0 12 7"><path d="M1 1L6 6L11 1" fill="none" stroke="#fcfcfc" stroke-width="1.1"/></svg>
<div style="left:1900px;top:198px;height:16px;line-height:16px;font-size:11px;color:#eff0f1;white-space:nowrap;">R</div>
<div style="left:1845px;top:221px;width:19px;height:357px;background:linear-gradient(to bottom,#2a1619 0,#2a1619 17px,#292b18 17px,#292b18 46px,#13291a 46px,#13291a 221px,#16211a 221px);border:1px solid #1c1f22;"></div>
<div style="left:1846px;top:238px;width:17px;height:1px;background:rgba(0,0,0,0.25);"></div>
<div style="left:1846px;top:267px;width:17px;height:1px;background:rgba(0,0,0,0.25);"></div>
<div style="left:1846px;top:307px;width:17px;height:1px;background:rgba(0,0,0,0.25);"></div>
<div style="left:1846px;top:363px;width:17px;height:1px;background:rgba(0,0,0,0.25);"></div>
<div style="left:1846px;top:408px;width:17px;height:1px;background:rgba(0,0,0,0.25);"></div>
<div style="left:1846px;top:442px;width:17px;height:1px;background:rgba(0,0,0,0.25);"></div>
<div style="left:1846px;top:492px;width:17px;height:1px;background:rgba(0,0,0,0.25);"></div>
<div style="left:1846px;top:535px;width:17px;height:1px;background:rgba(0,0,0,0.25);"></div>
<div style="left:1866px;top:221px;width:19px;height:357px;background:linear-gradient(to bottom,#2a1619 0,#2a1619 17px,#292b18 17px,#292b18 46px,#13291a 46px,#13291a 221px,#16211a 221px);border:1px solid #1c1f22;"></div>
<div style="left:1867px;top:238px;width:17px;height:1px;background:rgba(0,0,0,0.25);"></div>
<div style="left:1867px;top:267px;width:17px;height:1px;background:rgba(0,0,0,0.25);"></div>
<div style="left:1867px;top:307px;width:17px;height:1px;background:rgba(0,0,0,0.25);"></div>
<div style="left:1867px;top:363px;width:17px;height:1px;background:rgba(0,0,0,0.25);"></div>
<div style="left:1867px;top:408px;width:17px;height:1px;background:rgba(0,0,0,0.25);"></div>
<div style="left:1867px;top:442px;width:17px;height:1px;background:rgba(0,0,0,0.25);"></div>
<div style="left:1867px;top:492px;width:17px;height:1px;background:rgba(0,0,0,0.25);"></div>
<div style="left:1867px;top:535px;width:17px;height:1px;background:rgba(0,0,0,0.25);"></div>
<div style="left:1812px;top:231.5px;height:12px;line-height:12px;font-size:9.5px;color:#eff0f1;white-space:nowrap;width:28px;text-align:right;">0</div>
<div style="left:1812px;top:261.5px;height:12px;line-height:12px;font-size:9.5px;color:#eff0f1;white-space:nowrap;width:28px;text-align:right;">-2</div>
<div style="left:1812px;top:301.5px;height:12px;line-height:12px;font-size:9.5px;color:#eff0f1;white-space:nowrap;width:28px;text-align:right;">-5</div>
<div style="left:1812px;top:356.5px;height:12px;line-height:12px;font-size:9.5px;color:#eff0f1;white-space:nowrap;width:28px;text-align:right;">-10</div>
<div style="left:1812px;top:401.5px;height:12px;line-height:12px;font-size:9.5px;color:#eff0f1;white-space:nowrap;width:28px;text-align:right;">-15</div>
<div style="left:1812px;top:436.5px;height:12px;line-height:12px;font-size:9.5px;color:#eff0f1;white-space:nowrap;width:28px;text-align:right;">-20</div>
<div style="left:1812px;top:486.5px;height:12px;line-height:12px;font-size:9.5px;color:#eff0f1;white-space:nowrap;width:28px;text-align:right;">-30</div>
<div style="left:1812px;top:528.5px;height:12px;line-height:12px;font-size:9.5px;color:#eff0f1;white-space:nowrap;width:28px;text-align:right;">-45</div>
<div style="left:1899px;top:223px;width:6px;height:143px;background:#6c7074;border-radius:3px 3px 0 0;"></div>
<div style="left:1899px;top:366px;width:6px;height:209px;background:#35506e;border-radius:0 0 3px 3px;"></div>
<div style="left:1893px;top:357px;width:18px;height:18px;background:#4c4c4c;border:1px solid #6c7074;border-radius:9px;"></div>
<div style="left:1828px;top:584px;width:84px;height:20px;background:#232629;"></div>
<div style="left:1830px;top:587px;height:16px;line-height:16px;font-size:11px;color:#eff0f1;white-space:nowrap;">0.00dB</div>
<svg style="left:1896.0px;top:585.0px;" width="12" height="7" viewBox="0 0 12 7"><path d="M1 6L6 1L11 6" fill="none" stroke="#fcfcfc" stroke-width="1.1"/></svg>
<svg style="left:1896.0px;top:596.0px;" width="12" height="7" viewBox="0 0 12 7"><path d="M1 1L6 6L11 1" fill="none" stroke="#fcfcfc" stroke-width="1.1"/></svg>
<div style="left:1666px;top:111px;width:1px;height:493px;background:#60656a;"></div>
<div style="left:1761px;top:111px;width:1px;height:493px;background:#60656a;"></div>
<div style="left:1px;top:614px;width:257px;height:380px;background:#2d3035;border:1px solid #60656a;border-radius:3px;"></div>
<div style="left:6.5px;top:620.5px;height:16px;line-height:16px;font-size:12px;color:#eff0f1;white-space:nowrap;letter-spacing:-0.152px;">Project Bin</div>
<svg style="left:214.5px;top:622px;" width="10" height="10" viewBox="0 0 10 10"><path d="M5 1L9 5L5 9L1 5Z" fill="none" stroke="#bfc2c4" stroke-width="1"/></svg>
<svg style="left:233.5px;top:618px;" width="18" height="18" viewBox="0 0 18 18"><circle cx="9" cy="9" r="8" fill="#9d9fa2"/><path d="M5.3 5.3L12.7 12.7M12.7 5.3L5.3 12.7" stroke="#31363b" stroke-width="1.3" fill="none"/></svg>
<svg style="left:16px;top:657px;" width="12" height="12" viewBox="0 0 12 12"><rect x="0" y="0" width="12" height="12" fill="#d3d4d5"/><rect x="2" y="1.5" width="8" height="9" fill="#2d3035"/><path d="M4.5 3.5L8.2 6L4.5 8.500Z" fill="#fcfcfc"/><path d="M1 2.5V4M1 5.5V7M1 8.500V10M11 2.5V4M11 5.5V7M11 8.500V10" stroke="#2d3035" stroke-width="0.700" fill="none"/></svg>
<svg style="left:40.0px;top:660.0px;" width="12" height="7" viewBox="0 0 12 7"><path d="M1 1L6 6L11 1" fill="none" stroke="#fcfcfc" stroke-width="1.1"/></svg>
<svg style="left:64px;top:657px;" width="13" height="13" viewBox="0 0 13 13"><path d="M0.5 11.5V0.5H4.5L6 2H11.5V7" fill="none" stroke="#fcfcfc" stroke-width="1"/><path d="M0.5 0.5H4.5L6 2H11.5V3.500H5L3.800 4.800H0.5Z" fill="#fcfcfc"/><path d="M0.5 11.5H7" stroke="#fcfcfc" stroke-width="1"/><path d="M10 7.500V12.500M7.500 10H12.500" stroke="#fcfcfc" stroke-width="1.100" fill="none"/></svg>
<svg style="left:92px;top:657px;" width="12" height="12" viewBox="0 0 12 12"><path d="M0.5 3.500H11.500M4 1.800V0.500H8V1.800M2 4V11.500H10V4" fill="none" stroke="#4f5358" stroke-width="1"/></svg>
<svg style="left:119.5px;top:656.5px;" width="13" height="13" viewBox="1 1 15 15"><path d="M1.5 1.5H8L15 8.5L8.5 15L1.5 8Z" fill="#fcfcfc"/><circle cx="5" cy="5" r="1.5" fill="#2d3035"/></svg>
<svg style="left:148px;top:658px;" width="12" height="10" viewBox="0 0 12 10"><path d="M0 1H12M0 5H12M0 9H12" stroke="#fcfcfc" stroke-width="2" fill="none"/></svg>
<svg style="left:182.5px;top:657px;" width="13" height="12" viewBox="0 0 13 12"><path d="M0.700 0.600H12.300L7.700 6.500V10L5.300 11.400V6.500Z" fill="none" stroke="#fcfcfc" stroke-width="1.200" stroke-linejoin="round"/></svg>
<svg style="left:207.0px;top:660.0px;" width="12" height="7" viewBox="0 0 12 7"><path d="M1 1L6 6L11 1" fill="none" stroke="#fcfcfc" stroke-width="1.1"/></svg>
<svg style="left:233px;top:657px;" width="13" height="12" viewBox="0 0 13 12"><path d="M1 1L5 6L1 11M7.500 1L11.500 6L7.500 11" fill="none" stroke="#4c5055" stroke-width="1.500"/></svg>
<div style="left:3px;top:684px;width:253px;height:308px;border:1px solid #60656a;border-radius:2px;background:#232629;"></div>
<div style="left:4px;top:685px;width:251px;height:27px;background:#4d4d4d;border-bottom:1px solid #62666a;"></div>
<div style="left:10.3px;top:690.5px;height:16px;line-height:16px;font-size:12px;color:#eff0f1;white-space:nowrap;letter-spacing:-0.047px;">Name</div>
<svg style="left:237.5px;top:694.5px;" width="12" height="7" viewBox="0 0 12 7"><path d="M1 6L6 1L11 6" fill="none" stroke="#fcfcfc" stroke-width="1.1"/></svg>
<svg style="left:274px;top:626px;" width="18" height="22" viewBox="0 0 18 22"><path d="M0.5 5.5H17" stroke="#fcfcfc" stroke-width="1" fill="none"/><circle cx="9.5" cy="5.5" r="2.2" fill="#fcfcfc"/><path d="M5 16.5H17" stroke="#fcfcfc" stroke-width="1" fill="none"/><circle cx="3" cy="16.5" r="1.9" fill="none" stroke="#fcfcfc" stroke-width="1"/></svg>
<div style="left:301px;top:623px;width:132px;height:28px;background:#4d4d4d;border:1px solid #6c7074;border-radius:3px;"></div>
<div style="left:310px;top:636px;width:12px;height:4px;background:#fcfcfc;"></div>
<div style="left:314px;top:632px;width:4px;height:4px;background:#35506e;"></div>
<div style="left:327.0px;top:629.5px;height:16px;line-height:16px;font-size:11px;color:#eff0f1;white-space:nowrap;letter-spacing:-0.500px;">Normal mode</div>
<svg style="left:416.0px;top:634.5px;" width="12" height="7" viewBox="0 0 12 7"><path d="M1 1L6 6L11 1" fill="none" stroke="#fcfcfc" stroke-width="1.1"/></svg>
<div style="left:438px;top:620px;width:1px;height:34px;background:#585c61;"></div>
<svg style="left:451px;top:629px;" width="17" height="17" viewBox="0 0 17 17"><path d="M0.5 16.500L16 1" stroke="#fcfcfc" stroke-width="1" fill="none"/><path d="M0 7H6.500M10 7H16.500" stroke="#fcfcfc" stroke-width="1" fill="none"/><path d="M1.500 5V7M3.500 3V7M5.500 5V7M12.500 5V7M14.500 3V7M16 5V7" stroke="#fcfcfc" stroke-width="1" fill="none"/><path d="M0.500 9V14.500L4 9ZM12 9.500V15.500L15 12.500ZM15.300 9.500H16.500V15.500H15.300Z" fill="#fcfcfc"/></svg>
<div style="left:477px;top:621px;width:32px;height:32px;background:#53575c;border-radius:3px;"></div>
<svg style="left:486px;top:629px;" width="14" height="18" viewBox="0 0 14 18"><path d="M2.500 3L13 10.500L8 11.500L2.500 16.500Z" fill="#fcfcfc"/><rect x="1" y="0" width="2" height="2" fill="#fcfcfc"/></svg>
<svg style="left:520px;top:629px;" width="13" height="17" viewBox="0 0 13 17"><path d="M1.5 0.5L9.5 12.5M11.5 0.5L3.5 12.5" stroke="#fcfcfc" stroke-width="1.2" fill="none"/><circle cx="2.7" cy="14" r="2.1" fill="none" stroke="#fcfcfc" stroke-width="1.1"/><circle cx="10.3" cy="14" r="2.1" fill="none" stroke="#fcfcfc" stroke-width="1.1"/></svg>
<svg style="left:552px;top:633px;" width="17" height="9" viewBox="0 0 17 9"><rect x="0.6" y="0.6" width="3.8" height="7.8" fill="none" stroke="#fcfcfc" stroke-width="1.2"/><rect x="12.6" y="0.6" width="3.8" height="7.8" fill="none" stroke="#fcfcfc" stroke-width="1.2"/><path d="M5.500 2.300L8.600 4.500L5.500 6.700ZM11.500 2.300L8.400 4.500L11.500 6.700Z" fill="#fcfcfc"/></svg>
<div style="left:582px;top:620px;width:1px;height:34px;background:#585c61;"></div>
<div style="left:599.75px;top:629.5px;height:16px;line-height:16px;font-size:12.5px;color:#eff0f1;white-space:nowrap;letter-spacing:-0.573px;font-family:'Liberation Mono',monospace;">00:00:16:07 / 00:00:00:00</div>
<svg style="left:787.0px;top:633.7px;" width="12" height="7" viewBox="0 0 12 7"><path d="M1 1L6 6L11 1" fill="none" stroke="#fcfcfc" stroke-width="1.1"/></svg>
<div style="left:811px;top:620px;width:1px;height:34px;background:#585c61;"></div>
<svg style="left:824px;top:629px;" width="16" height="16" viewBox="0 0 16 16"><rect x="0.5" y="0.5" width="15" height="15" fill="none" stroke="#fcfcfc" stroke-width="1"/><rect x="8" y="2" width="6" height="6" fill="#c9cbcc"/><rect x="2" y="8" width="6" height="6" fill="#a0a3a5"/></svg>
<svg style="left:856px;top:630px;" width="20" height="14" viewBox="0 0 20 14"><rect x="0.800" y="7" width="4.400" height="4" fill="#fcfcfc"/><rect x="6" y="4.800" width="6.200" height="5" fill="#35506e"/><path d="M6.500 1H11.500L9 3.500Z" fill="#35506e"/><path d="M13 7H16V5L19 9L16 13V11H13Z" fill="#fcfcfc"/></svg>
<svg style="left:892px;top:629px;" width="17" height="13" viewBox="0 0 17 13"><rect x="0" y="8" width="16.200" height="4" fill="#fcfcfc"/><rect x="5.100" y="5" width="6" height="5" fill="#35506e"/><path d="M5.500 1H11L8.200 4Z" fill="#35506e"/></svg>
<svg style="left:926px;top:634px;" width="17" height="10" viewBox="0 0 17 10"><rect x="0" y="3" width="4" height="4" fill="#fcfcfc"/><path d="M5.500 3L10 7.500M10 3L5.500 7.500" stroke="#da4453" stroke-width="1.300" fill="none"/><path d="M10.500 5L13.800 1V3H16.200V7H13.800V9Z" fill="#fcfcfc"/></svg>
<svg style="left:960px;top:636px;" width="17" height="7" viewBox="0 0 17 7"><rect x="0" y="1" width="4" height="4" fill="#fcfcfc"/><path d="M5.500 1L10 5.500M10 1L5.500 5.500" stroke="#da4453" stroke-width="1.300" fill="none"/><rect x="12" y="1" width="4.300" height="4" fill="#fcfcfc"/></svg>
<div style="left:989px;top:620px;width:1px;height:34px;background:#585c61;"></div>
<svg style="left:1006.7px;top:628.8px;" width="16.5" height="16.5" viewBox="0 0 16 16"><path d="M8 0.5L10.2 5.6L15.7 6.1L11.6 9.8L12.8 15.2L8 12.4L3.2 15.2L4.4 9.8L0.3 6.1L5.8 5.6Z" fill="#fcfcfc"/></svg>
<div style="left:1041px;top:620px;width:1px;height:34px;background:#585c61;"></div>
<svg style="left:1052.5px;top:627.5px;" width="19" height="19" viewBox="0 0 19 19"><circle cx="9.500" cy="9.500" r="7.800" fill="none" stroke="#fcfcfc" stroke-width="1.100"/><path d="M9 6.600A2.900 2.900 0 0 0 9 12.400Z" fill="#da4453"/><path d="M9.600 6.800L13 9.500L9.600 12.200Z" fill="#fcfcfc"/></svg>
<svg style="left:1082.5px;top:633.7px;" width="12" height="7" viewBox="0 0 12 7"><path d="M1 1L6 6L11 1" fill="none" stroke="#fcfcfc" stroke-width="1.1"/></svg>
<div style="left:1100px;top:621px;width:32px;height:32px;background:#53575c;border-radius:3px;"></div>
<svg style="left:1108px;top:629px;" width="16" height="16" viewBox="0 0 16 16"><path d="M0 4.500H16M0 11.500H16" stroke="#fcfcfc" stroke-width="1" fill="none"/><path d="M11.500 3.300H14V5.700H11.500ZM4 10.300H6.500V12.700H4Z" fill="#fcfcfc"/></svg>
<div style="left:1137px;top:620px;width:1px;height:34px;background:#585c61;"></div>
<svg style="left:1150px;top:631px;" width="17" height="12" viewBox="0 0 17 12"><rect x="0.500" y="0.500" width="15.500" height="11" fill="none" stroke="#fcfcfc" stroke-width="1.100"/><path d="M2.500 6.500H13.500M2.500 8.800H7M9.500 8.800H13.500" stroke="#fcfcfc" stroke-width="0.900" fill="none"/></svg>
<div style="left:260px;top:660px;width:1660px;height:1px;background:#565a5f;"></div>
<div style="left:328.5px;top:676px;height:16px;line-height:16px;font-size:11px;color:#24282c;white-space:nowrap;letter-spacing:-0.221px;">Master</div>
<div style="left:430px;top:676px;width:1490px;height:1px;background:#1d2023;"></div>
<div style="left:430px;top:699px;width:1490px;height:1px;background:#1d2023;"></div>
<div style="left:430px;top:700px;width:1490px;height:6px;background:#26292d;"></div>
<div style="left:431px;top:700px;width:37px;height:6px;background:#33424f;"></div>
<div style="left:468px;top:699px;width:2px;height:7px;background:#9a9ea2;"></div>
<div style="left:446px;top:699px;width:7px;height:7px;background:#a5a8ab;"></div>
<div style="left:448px;top:701px;width:3px;height:3px;background:#33424f;"></div>
<div style="left:430.5px;top:675.5px;height:14px;line-height:14px;font-size:11.5px;color:#c0c4c7;white-space:nowrap;letter-spacing:-0.078px;">00:00:00:00</div>
<div style="left:466px;top:695px;width:1px;height:4px;background:#c8cbcd;"></div>
<div style="left:501.78px;top:675.5px;height:14px;line-height:14px;font-size:11.5px;color:#c0c4c7;white-space:nowrap;letter-spacing:-0.078px;">00:00:05:07</div>
<div style="left:501px;top:691px;width:1px;height:8px;background:#c8cbcd;"></div>
<div style="left:537px;top:695px;width:1px;height:4px;background:#c8cbcd;"></div>
<div style="left:573.06px;top:675.5px;height:14px;line-height:14px;font-size:11.5px;color:#c0c4c7;white-space:nowrap;letter-spacing:-0.078px;">00:00:10:14</div>
<div style="left:573px;top:691px;width:1px;height:8px;background:#c8cbcd;"></div>
<div style="left:608px;top:695px;width:1px;height:4px;background:#c8cbcd;"></div>
<div style="left:644.34px;top:675.5px;height:14px;line-height:14px;font-size:11.5px;color:#c0c4c7;white-space:nowrap;letter-spacing:-0.078px;">00:00:15:21</div>
<div style="left:644px;top:691px;width:1px;height:8px;background:#c8cbcd;"></div>
<div style="left:679px;top:695px;width:1px;height:4px;background:#c8cbcd;"></div>
<div style="left:715.62px;top:675.5px;height:14px;line-height:14px;font-size:11.5px;color:#c0c4c7;white-space:nowrap;letter-spacing:-0.078px;">00:00:21:03</div>
<div style="left:715px;top:691px;width:1px;height:8px;background:#c8cbcd;"></div>
<div style="left:751px;top:695px;width:1px;height:4px;background:#c8cbcd;"></div>
<div style="left:786.9px;top:675.5px;height:14px;line-height:14px;font-size:11.5px;color:#c0c4c7;white-space:nowrap;letter-spacing:-0.078px;">00:00:26:09</div>
<div style="left:786px;top:691px;width:1px;height:8px;background:#c8cbcd;"></div>
<div style="left:822px;top:695px;width:1px;height:4px;background:#c8cbcd;"></div>
<div style="left:858.18px;top:675.5px;height:14px;line-height:14px;font-size:11.5px;color:#c0c4c7;white-space:nowrap;letter-spacing:-0.078px;">00:00:31:17</div>
<div style="left:858px;top:691px;width:1px;height:8px;background:#c8cbcd;"></div>
<div style="left:893px;top:695px;width:1px;height:4px;background:#c8cbcd;"></div>
<div style="left:929.46px;top:675.5px;height:14px;line-height:14px;font-size:11.5px;color:#c0c4c7;white-space:nowrap;letter-spacing:-0.078px;">00:00:36:24</div>
<div style="left:929px;top:691px;width:1px;height:8px;background:#c8cbcd;"></div>
<div style="left:965px;top:695px;width:1px;height:4px;background:#c8cbcd;"></div>
<div style="left:1000.74px;top:675.5px;height:14px;line-height:14px;font-size:11.5px;color:#c0c4c7;white-space:nowrap;letter-spacing:-0.078px;">00:00:42:06</div>
<div style="left:1000px;top:691px;width:1px;height:8px;background:#c8cbcd;"></div>
<div style="left:1036px;top:695px;width:1px;height:4px;background:#c8cbcd;"></div>
<div style="left:1072.02px;top:675.5px;height:14px;line-height:14px;font-size:11.5px;color:#c0c4c7;white-space:nowrap;letter-spacing:-0.078px;">00:00:47:13</div>
<div style="left:1072px;top:691px;width:1px;height:8px;background:#c8cbcd;"></div>
<div style="left:1107px;top:695px;width:1px;height:4px;background:#c8cbcd;"></div>
<div style="left:1143.3px;top:675.5px;height:14px;line-height:14px;font-size:11.5px;color:#c0c4c7;white-space:nowrap;letter-spacing:-0.078px;">00:00:52:19</div>
<div style="left:1143px;top:691px;width:1px;height:8px;background:#c8cbcd;"></div>
<div style="left:1178px;top:695px;width:1px;height:4px;background:#c8cbcd;"></div>
<div style="left:1214.58px;top:675.5px;height:14px;line-height:14px;font-size:11.5px;color:#c0c4c7;white-space:nowrap;letter-spacing:-0.078px;">00:00:58:02</div>
<div style="left:1214px;top:691px;width:1px;height:8px;background:#c8cbcd;"></div>
<div style="left:1250px;top:695px;width:1px;height:4px;background:#c8cbcd;"></div>
<div style="left:1285.86px;top:675.5px;height:14px;line-height:14px;font-size:11.5px;color:#c0c4c7;white-space:nowrap;letter-spacing:-0.078px;">00:01:03:09</div>
<div style="left:1285px;top:691px;width:1px;height:8px;background:#c8cbcd;"></div>
<div style="left:1321px;top:695px;width:1px;height:4px;background:#c8cbcd;"></div>
<div style="left:1357.14px;top:675.5px;height:14px;line-height:14px;font-size:11.5px;color:#c0c4c7;white-space:nowrap;letter-spacing:-0.078px;">00:01:08:15</div>
<div style="left:1357px;top:691px;width:1px;height:8px;background:#c8cbcd;"></div>
<div style="left:1392px;top:695px;width:1px;height:4px;background:#c8cbcd;"></div>
<div style="left:1428.42px;top:675.5px;height:14px;line-height:14px;font-size:11.5px;color:#c0c4c7;white-space:nowrap;letter-spacing:-0.078px;">00:01:13:23</div>
<div style="left:1428px;top:691px;width:1px;height:8px;background:#c8cbcd;"></div>
<div style="left:1464px;top:695px;width:1px;height:4px;background:#c8cbcd;"></div>
<div style="left:1499.7px;top:675.5px;height:14px;line-height:14px;font-size:11.5px;color:#c0c4c7;white-space:nowrap;letter-spacing:-0.078px;">00:01:19:05</div>
<div style="left:1499px;top:691px;width:1px;height:8px;background:#c8cbcd;"></div>
<div style="left:1535px;top:695px;width:1px;height:4px;background:#c8cbcd;"></div>
<div style="left:1570.98px;top:675.5px;height:14px;line-height:14px;font-size:11.5px;color:#c0c4c7;white-space:nowrap;letter-spacing:-0.078px;">00:01:24:12</div>
<div style="left:1570px;top:691px;width:1px;height:8px;background:#c8cbcd;"></div>
<div style="left:1606px;top:695px;width:1px;height:4px;background:#c8cbcd;"></div>
<div style="left:1642.26px;top:675.5px;height:14px;line-height:14px;font-size:11.5px;color:#c0c4c7;white-space:nowrap;letter-spacing:-0.078px;">00:01:29:19</div>
<div style="left:1642px;top:691px;width:1px;height:8px;background:#c8cbcd;"></div>
<div style="left:1677px;top:695px;width:1px;height:4px;background:#c8cbcd;"></div>
<div style="left:1713.54px;top:675.5px;height:14px;line-height:14px;font-size:11.5px;color:#c0c4c7;white-space:nowrap;letter-spacing:-0.078px;">00:01:35:01</div>
<div style="left:1713px;top:691px;width:1px;height:8px;background:#c8cbcd;"></div>
<div style="left:1749px;top:695px;width:1px;height:4px;background:#c8cbcd;"></div>
<div style="left:1784.82px;top:675.5px;height:14px;line-height:14px;font-size:11.5px;color:#c0c4c7;white-space:nowrap;letter-spacing:-0.078px;">00:01:40:07</div>
<div style="left:1784px;top:691px;width:1px;height:8px;background:#c8cbcd;"></div>
<div style="left:1820px;top:695px;width:1px;height:4px;background:#c8cbcd;"></div>
<div style="left:1856.1px;top:675.5px;height:14px;line-height:14px;font-size:11.5px;color:#c0c4c7;white-space:nowrap;letter-spacing:-0.078px;">00:01:45:14</div>
<div style="left:1856px;top:691px;width:1px;height:8px;background:#c8cbcd;"></div>
<div style="left:1891px;top:695px;width:1px;height:4px;background:#c8cbcd;"></div>
<div style="left:260px;top:706px;width:169px;height:67px;background:#272a2f;"></div>
<div style="left:431px;top:706px;width:1479px;height:67px;background:#292c31;"></div>
<div style="left:260px;top:772px;width:1650px;height:1px;background:#1e2124;"></div>
<svg style="left:281px;top:714px;" width="22" height="12" viewBox="0 0 22 12"><path d="M1 1L11 10.5L21 1" fill="none" stroke="#fcfcfc" stroke-width="1.1"/></svg>
<div style="left:306px;top:707px;width:14px;height:26px;background:#48cf84;"></div>
<div style="left:306.3px;top:713.5px;height:14px;line-height:14px;font-size:12px;color:#1d5f41;white-space:nowrap;letter-spacing:-1.400px;">V2</div>
<svg style="left:347px;top:711px;" width="18" height="18" viewBox="0 0 18 18"><path d="M0 13.7L4.4 18L17.8 4.4L13.6 0Z" fill="#8e9193"/><path d="M13.6 1.8L16.2 4.4L12.4 8.1L9.9 5.6Z" fill="#272a2f"/><path d="M2.3 0.3L3 1.8L4.5 2.4L3 3L2.3 4.6L1.6 3L0.1 2.4L1.6 1.8Z" fill="#8e9193"/></svg>
<svg style="left:375px;top:711px;" width="18" height="18" viewBox="0 0 18 18"><rect x="0" y="0" width="18" height="18" fill="#fcfcfc"/><rect x="4.8" y="2" width="8.4" height="5" fill="#272a2f"/><rect x="4.8" y="11" width="8.4" height="5" fill="#272a2f"/><circle cx="2.4" cy="3.9" r="0.9" fill="#272a2f"/><circle cx="15.6" cy="3.9" r="0.9" fill="#272a2f"/><circle cx="2.4" cy="9" r="0.9" fill="#272a2f"/><circle cx="15.6" cy="9" r="0.9" fill="#272a2f"/><circle cx="2.4" cy="14.1" r="0.9" fill="#272a2f"/><circle cx="15.6" cy="14.1" r="0.9" fill="#272a2f"/></svg>
<svg style="left:404px;top:711px;" width="16" height="18" viewBox="0 0 16 18"><rect x="0.85" y="9.85" width="14.3" height="7.3" fill="none" stroke="#fcfcfc" stroke-width="1.7"/><path d="M4 6V5A4 4 0 0 1 12 5V9.5" fill="none" stroke="#fcfcfc" stroke-width="1.7"/></svg>
<div style="left:260px;top:773px;width:169px;height:67px;background:#323a45;"></div>
<div style="left:431px;top:773px;width:1479px;height:67px;background:#2b323b;"></div>
<div style="left:260px;top:839px;width:1650px;height:1px;background:#1e2124;"></div>
<svg style="left:281px;top:781px;" width="22" height="12" viewBox="0 0 22 12"><path d="M1 1L11 10.5L21 1" fill="none" stroke="#fcfcfc" stroke-width="1.1"/></svg>
<div style="left:306px;top:774px;width:14px;height:26px;background:#48cf84;"></div>
<div style="left:306.3px;top:780.5px;height:14px;line-height:14px;font-size:12px;color:#1d5f41;white-space:nowrap;letter-spacing:-1.400px;">V1</div>
<svg style="left:347px;top:778px;" width="18" height="18" viewBox="0 0 18 18"><path d="M0 13.7L4.4 18L17.8 4.4L13.6 0Z" fill="#8e9193"/><path d="M13.6 1.8L16.2 4.4L12.4 8.1L9.9 5.6Z" fill="#323a45"/><path d="M2.3 0.3L3 1.8L4.5 2.4L3 3L2.3 4.6L1.6 3L0.1 2.4L1.6 1.8Z" fill="#8e9193"/></svg>
<svg style="left:375px;top:778px;" width="18" height="18" viewBox="0 0 18 18"><rect x="0" y="0" width="18" height="18" fill="#fcfcfc"/><rect x="4.8" y="2" width="8.4" height="5" fill="#323a45"/><rect x="4.8" y="11" width="8.4" height="5" fill="#323a45"/><circle cx="2.4" cy="3.9" r="0.9" fill="#323a45"/><circle cx="15.6" cy="3.9" r="0.9" fill="#323a45"/><circle cx="2.4" cy="9" r="0.9" fill="#323a45"/><circle cx="15.6" cy="9" r="0.9" fill="#323a45"/><circle cx="2.4" cy="14.1" r="0.9" fill="#323a45"/><circle cx="15.6" cy="14.1" r="0.9" fill="#323a45"/></svg>
<svg style="left:404px;top:778px;" width="16" height="18" viewBox="0 0 16 18"><rect x="0.85" y="9.85" width="14.3" height="7.3" fill="none" stroke="#fcfcfc" stroke-width="1.7"/><path d="M4 6V5A4 4 0 0 1 12 5V9.5" fill="none" stroke="#fcfcfc" stroke-width="1.7"/></svg>
<div style="left:260px;top:840px;width:169px;height:67px;background:#2c2830;"></div>
<div style="left:431px;top:840px;width:1479px;height:67px;background:#2f2b36;"></div>
<div style="left:260px;top:906px;width:1650px;height:1px;background:#1e2124;"></div>
<svg style="left:281px;top:848px;" width="22" height="12" viewBox="0 0 22 12"><path d="M1 1L11 10.5L21 1" fill="none" stroke="#fcfcfc" stroke-width="1.1"/></svg>
<div style="left:306px;top:841px;width:14px;height:26px;background:#48cf84;"></div>
<div style="left:306.3px;top:847.5px;height:14px;line-height:14px;font-size:12px;color:#1d5f41;white-space:nowrap;letter-spacing:-1.400px;">A1</div>
<svg style="left:347px;top:845px;" width="18" height="18" viewBox="0 0 18 18"><path d="M0 13.7L4.4 18L17.8 4.4L13.6 0Z" fill="#8e9193"/><path d="M13.6 1.8L16.2 4.4L12.4 8.1L9.9 5.6Z" fill="#2c2830"/><path d="M2.3 0.3L3 1.8L4.5 2.4L3 3L2.3 4.6L1.6 3L0.1 2.4L1.6 1.8Z" fill="#8e9193"/></svg>
<svg style="left:375px;top:845px;" width="19" height="18" viewBox="0 0 19 18"><path d="M0 5.700H2.500L9.800 0V18L2.500 12.300H0Z" fill="#fcfcfc"/><path d="M12.200 5.400A4.300 4.300 0 0 1 12.200 12.600" fill="none" stroke="#fcfcfc" stroke-width="1.300"/><path d="M13 1.200A8.300 8.300 0 0 1 13 16.800" fill="none" stroke="#fcfcfc" stroke-width="1.200"/></svg>
<svg style="left:404px;top:845px;" width="16" height="18" viewBox="0 0 16 18"><rect x="0.85" y="9.85" width="14.3" height="7.3" fill="none" stroke="#fcfcfc" stroke-width="1.7"/><path d="M4 6V5A4 4 0 0 1 12 5V9.5" fill="none" stroke="#fcfcfc" stroke-width="1.7"/></svg>
<div style="left:260px;top:907px;width:169px;height:67px;background:#2c2830;"></div>
<div style="left:431px;top:907px;width:1479px;height:67px;background:#2f2b36;"></div>
<div style="left:260px;top:973px;width:1650px;height:1px;background:#1e2124;"></div>
<svg style="left:281px;top:915px;" width="22" height="12" viewBox="0 0 22 12"><path d="M1 1L11 10.5L21 1" fill="none" stroke="#fcfcfc" stroke-width="1.1"/></svg>
<div style="left:306px;top:908px;width:14px;height:26px;background:#48cf84;"></div>
<div style="left:306.3px;top:914.5px;height:14px;line-height:14px;font-size:12px;color:#1d5f41;white-space:nowrap;letter-spacing:-1.400px;">A2</div>
<svg style="left:347px;top:912px;" width="18" height="18" viewBox="0 0 18 18"><path d="M0 13.7L4.4 18L17.8 4.4L13.6 0Z" fill="#8e9193"/><path d="M13.6 1.8L16.2 4.4L12.4 8.1L9.9 5.6Z" fill="#2c2830"/><path d="M2.3 0.3L3 1.8L4.5 2.4L3 3L2.3 4.6L1.6 3L0.1 2.4L1.6 1.8Z" fill="#8e9193"/></svg>
<svg style="left:375px;top:912px;" width="19" height="18" viewBox="0 0 19 18"><path d="M0 5.700H2.500L9.800 0V18L2.500 12.300H0Z" fill="#fcfcfc"/><path d="M12.200 5.400A4.300 4.300 0 0 1 12.200 12.600" fill="none" stroke="#fcfcfc" stroke-width="1.300"/><path d="M13 1.200A8.300 8.300 0 0 1 13 16.800" fill="none" stroke="#fcfcfc" stroke-width="1.200"/></svg>
<svg style="left:404px;top:912px;" width="16" height="18" viewBox="0 0 16 18"><rect x="0.85" y="9.85" width="14.3" height="7.3" fill="none" stroke="#fcfcfc" stroke-width="1.7"/><path d="M4 6V5A4 4 0 0 1 12 5V9.5" fill="none" stroke="#fcfcfc" stroke-width="1.7"/></svg>
<div style="left:260px;top:706px;width:1650px;height:1px;background:#1e2124;"></div>
<div style="left:1910px;top:706px;width:1px;height:268px;background:#1e2124;"></div>
<div style="left:429px;top:706px;width:1px;height:268px;background:#15181b;"></div>
<div style="left:260px;top:773px;width:1650px;height:1px;background:rgba(0,0,0,0.22);"></div>
<div style="left:260px;top:840px;width:1650px;height:1px;background:rgba(0,0,0,0.22);"></div>
<div style="left:260px;top:907px;width:1650px;height:1px;background:rgba(0,0,0,0.22);"></div>
<div style="left:430px;top:690px;width:1px;height:284px;background:#fcfcfc;"></div>
<svg style="left:430px;top:690px;" width="8" height="10" viewBox="0 0 8 10"><path d="M0 0H7.5L0 9Z" fill="#fcfcfc"/></svg>
<div style="left:430px;top:987px;width:144px;height:8px;background:#5d6165;border-radius:0 4px 4px 0;"></div>
<div style="left:4.2px;top:1004px;height:16px;line-height:16px;font-size:11px;color:#eff0f1;white-space:nowrap;letter-spacing:0.321px;font-weight:bold;">Shift drag</div>
<div style="left:61.9px;top:1004px;height:16px;line-height:16px;font-size:11px;color:#eff0f1;white-space:nowrap;letter-spacing:-0.010px;">for rubber-band selection,</div>
<div style="left:191.0px;top:1004px;height:16px;line-height:16px;font-size:11px;color:#eff0f1;white-space:nowrap;letter-spacing:0.137px;font-weight:bold;">Shift click</div>
<div style="left:248.0px;top:1004px;height:16px;line-height:16px;font-size:11px;color:#eff0f1;white-space:nowrap;letter-spacing:-0.093px;">for multiple selection,</div>
<div style="left:353.0px;top:1004px;height:16px;line-height:16px;font-size:11px;color:#eff0f1;white-space:nowrap;letter-spacing:0.336px;font-weight:bold;">Ctrl drag</div>
<div style="left:405.0px;top:1004px;height:16px;line-height:16px;font-size:11px;color:#eff0f1;white-space:nowrap;letter-spacing:-0.116px;">to pan</div>
<div style="left:1588px;top:999px;width:26px;height:25px;background:#53575c;border-radius:3px;"></div>
<div style="left:1616px;top:999px;width:26px;height:25px;background:#53575c;border-radius:3px;"></div>
<div style="left:1644px;top:999px;width:26px;height:25px;background:#53575c;border-radius:3px;"></div>
<div style="left:1672px;top:999px;width:26px;height:25px;background:#53575c;border-radius:3px;"></div>
<div style="left:1700px;top:999px;width:26px;height:25px;background:#53575c;border-radius:3px;"></div>
<svg style="left:1594px;top:1004px;" width="14" height="14" viewBox="1 1 15 15"><path d="M1.5 1.5H8L15 8.5L8.5 15L1.5 8Z" fill="#fcfcfc"/><circle cx="5" cy="5" r="1.5" fill="#53575c"/></svg>
<svg style="left:1623px;top:1005px;" width="13" height="13" viewBox="0 0 18 18"><rect x="0" y="0" width="18" height="18" fill="#fcfcfc"/><rect x="4.8" y="2" width="8.4" height="5" fill="#53575c"/><rect x="4.8" y="11" width="8.4" height="5" fill="#53575c"/><circle cx="2.4" cy="3.9" r="0.9" fill="#53575c"/><circle cx="15.6" cy="3.9" r="0.9" fill="#53575c"/><circle cx="2.4" cy="9" r="0.9" fill="#53575c"/><circle cx="15.6" cy="9" r="0.9" fill="#53575c"/><circle cx="2.4" cy="14.1" r="0.9" fill="#53575c"/><circle cx="15.6" cy="14.1" r="0.9" fill="#53575c"/></svg>
<svg style="left:1649px;top:1005px;" width="17" height="13" viewBox="0 0 17 13"><path d="M4.5 1.500L7.5 6.500L4.5 11.500L1.5 6.500Z M12.5 0.500L16 6.500L12.5 12.500L9 6.500Z" fill="#fcfcfc"/><path d="M0 6.500H17" stroke="#fcfcfc" stroke-width="1"/></svg>
<svg style="left:1679px;top:1004px;" width="13" height="14" viewBox="0 0 13 14"><path d="M1 0V14" stroke="#fcfcfc" stroke-width="1.400"/><path d="M1 0.500H6L12 4.500L6 6.500L1 7Z" fill="#fcfcfc"/></svg>
<svg style="left:1706px;top:1004px;" width="15" height="14" viewBox="0 0 15 14"><path d="M3.500 0V14" stroke="#fcfcfc" stroke-width="1.300"/><path d="M0 7H15" stroke="#fcfcfc" stroke-width="0.800" stroke-dasharray="2 1.500"/><rect x="7" y="5.500" width="5" height="3" fill="#fcfcfc"/><circle cx="3.500" cy="7" r="1.600" fill="#fcfcfc"/></svg>
<div style="left:1731px;top:998px;width:1px;height:27px;background:#585c61;"></div>
<svg style="left:1743px;top:1005px;" width="12" height="12" viewBox="0 0 14 14"><rect x="4" y="4" width="6" height="6" fill="none" stroke="#fcfcfc" stroke-width="1.200"/><path d="M0.600 4V0.600H4M10 0.600H13.400V4M13.400 10V13.400H10M4 13.400H0.600V10" fill="none" stroke="#fcfcfc" stroke-width="1.200"/><path d="M6 0.600H8M6 13.400H8M0.600 6V8M13.400 6V8" stroke="#fcfcfc" stroke-width="1.200"/></svg>
<svg style="left:1771px;top:1005px;" width="12" height="12" viewBox="0 0 14 14"><path d="M0.600 6V0.600H13.400V13.400H8" fill="none" stroke="#fcfcfc" stroke-width="1.200"/><rect x="1" y="9" width="4" height="4" fill="none" stroke="#fcfcfc" stroke-width="1.200"/><path d="M11 3L6.500 7.500M6.500 4V7.500H10" fill="none" stroke="#fcfcfc" stroke-width="1.200"/></svg>
<div style="left:1793px;top:1008px;width:56px;height:6px;background:#6c7074;border-radius:3px 0 0 3px;"></div>
<div style="left:1849px;top:1008px;width:40px;height:6px;background:#35506e;border-radius:0 3px 3px 0;"></div>
<div style="left:1840px;top:1002px;width:18px;height:18px;background:#4c4c4c;border:1px solid #6c7074;border-radius:9px;"></div>
<svg style="left:1899px;top:1005px;" width="12" height="12" viewBox="0 0 14 14"><path d="M0.600 4V0.600H4M10 13.400H13.400V10M4 13.400H0.600V10" fill="none" stroke="#fcfcfc" stroke-width="1.200" stroke-dasharray="2.500 1.500"/><rect x="1" y="9.500" width="3.500" height="3.500" fill="none" stroke="#fcfcfc" stroke-width="1.100"/><path d="M6 8L12.500 1.500M8.500 1H13V5.500" fill="none" stroke="#fcfcfc" stroke-width="1.200"/></svg>
</body></html>
